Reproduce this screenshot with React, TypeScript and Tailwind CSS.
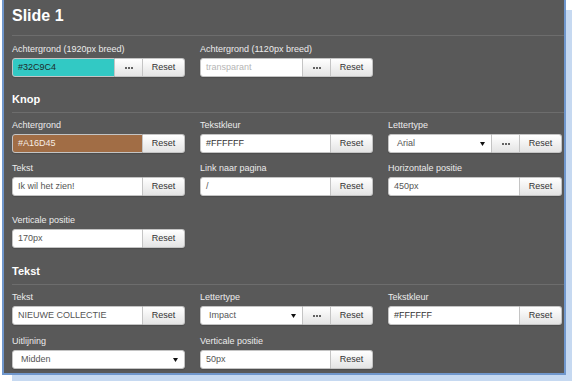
import React from "react";

const Label = ({ children }: { children: React.ReactNode }) => (
  <div className="text-[9px] leading-[12px] text-[#ececec] mb-[3px] whitespace-nowrap">{children}</div>
);

const Dots = () => (
  <div className="w-[28px] shrink-0 flex items-center justify-center gap-[1px] border-y border-r border-[#c4c4c4] bg-linear-to-b from-white to-[#e4e4e4]">
    <span className="w-[2px] h-[2px] rounded-full bg-[#333]" />
    <span className="w-[2px] h-[2px] rounded-full bg-[#333]" />
    <span className="w-[2px] h-[2px] rounded-full bg-[#333]" />
  </div>
);

const Reset = () => (
  <div className="w-[42px] shrink-0 flex items-center justify-center rounded-r-[3px] border-y border-r border-[#c4c4c4] bg-linear-to-b from-white to-[#e4e4e4] text-[9px] text-[#333]">
    Reset
  </div>
);

const Arrow = () => (
  <svg width="5" height="4" viewBox="0 0 5 4" className="shrink-0">
    <polygon points="0,0 5,0 2.5,4" fill="#111" />
  </svg>
);

type GroupProps = {
  value: string;
  dots?: boolean;
  select?: boolean;
  bg?: string;
  color?: string;
  placeholder?: boolean;
  reset?: boolean;
};

const Group = ({ value, dots, select, bg, color, placeholder, reset = true }: GroupProps) => (
  <div className="flex h-[19px] shadow-[0_1px_1px_rgba(0,0,0,0.15)] rounded-[3px]">
    <div
      className={
        "flex-1 min-w-0 flex items-center text-[9px] border border-[#c4c4c4] " +
        (reset ? "rounded-l-[3px] " : "rounded-[3px] ") +
        (select ? "pl-[8px] pr-[6px] justify-between " : "pl-[5px] ")
      }
      style={{ background: bg ?? "#ffffff", color: placeholder ? "#b5b5b5" : color ?? "#555555" }}
    >
      <span className="whitespace-nowrap">{value}</span>
      {select && <Arrow />}
    </div>
    {dots && <Dots />}
    {reset && <Reset />}
  </div>
);

const Field = (props: GroupProps & { label: string }) => (
  <div>
    <Label>{props.label}</Label>
    <Group {...props} />
  </div>
);

const Header = ({ children, className }: { children: React.ReactNode; className?: string }) => (
  <div className={"text-[11px] leading-[14px] font-bold text-white pb-[6px] border-b border-[#6d6d6d] " + (className ?? "")}>
    {children}
  </div>
);

export default function App() {
  return (
    <div className="bg-white w-[577px] h-[384px] overflow-hidden font-['Liberation_Sans',Arial,sans-serif]">
      <div className="ml-[2px] w-[564px] h-[375px] bg-[#595959] border-x-2 border-b-2 border-[#7097cc] shadow-[8px_8px_0_-2px_#c6d9f1] pl-[8px]">
        <div className="pt-[6px] pb-[9px] text-[16px] leading-[20px] font-bold text-white border-b border-[#6d6d6d]">
          Slide 1
        </div>

        <div className="mt-[7px] grid grid-cols-[173px_173px_174px] gap-x-[15px]">
          <Field label="Achtergrond (1920px breed)" value="#32C9C4" dots bg="#32C9C4" color="#1d2b2b" />
          <Field label="Achtergrond (1120px breed)" value="transparant" dots placeholder />
        </div>

        <Header className="mt-[15px]">Knop</Header>
        <div className="mt-[6px] grid grid-cols-[173px_173px_174px] gap-x-[15px] gap-y-[9px]">
          <Field label="Achtergrond" value="#A16D45" bg="#A16D45" color="#f6ece4" />
          <Field label="Tekstkleur" value="#FFFFFF" color="#333333" />
          <Field label="Lettertype" value="Arial" select dots />
          <Field label="Tekst" value="Ik wil het zien!" />
          <Field label="Link naar pagina" value="/" />
          <Field label="Horizontale positie" value="450px" />
        </div>
        <div className="mt-[18px] grid grid-cols-[173px_173px_174px] gap-x-[15px]">
          <Field label="Verticale positie" value="170px" />
        </div>

        <Header className="mt-[16px]">Tekst</Header>
        <div className="mt-[6px] grid grid-cols-[173px_173px_174px] gap-x-[15px] gap-y-[10px]">
          <Field label="Tekst" value="NIEUWE COLLECTIE" />
          <Field label="Lettertype" value="Impact" select dots />
          <Field label="Tekstkleur" value="#FFFFFF" color="#333333" />
          <Field label="Uitlijning" value="Midden" select reset={false} />
          <Field label="Verticale positie" value="50px" />
        </div>
      </div>
    </div>
  );
}
